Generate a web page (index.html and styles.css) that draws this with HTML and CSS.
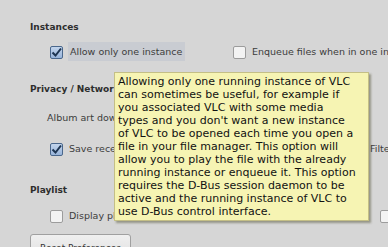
FILE: index.html
```html
<!DOCTYPE html>
<html>
<head>
<meta charset="utf-8">
<link rel="stylesheet" href="styles.css">
</head>
<body>
<div class="panel">
  <div class="heading h1">Instances</div>
  <div class="row r1">
    <div class="col first">
      <span class="cb checked"><svg viewBox="0 0 13 13" width="13" height="13"><path d="M2.5 6.5 L5.5 9.5 L11 2.5" fill="none" stroke="#1e3552" stroke-width="2"/></svg></span>
      <span class="label hl">Allow only one instance</span>
    </div>
    <div class="col">
      <span class="cb"></span>
      <span class="label">Enqueue files when in one instance mode</span>
    </div>
  </div>

  <div class="heading h2">Privacy / Network Interaction</div>
  <div class="row r2">
    <span class="label album">Album art download policy:</span>
  </div>
  <div class="row r3">
    <div class="col first">
      <span class="cb checked"><svg viewBox="0 0 13 13" width="13" height="13"><path d="M2.5 6.5 L5.5 9.5 L11 2.5" fill="none" stroke="#1e3552" stroke-width="2"/></svg></span>
      <span class="label">Save recently played items</span>
    </div>
    <div class="col filter">
      <span class="label">Filter:</span>
    </div>
  </div>

  <div class="heading h3">Playlist</div>
  <div class="row r4">
    <div class="col first">
      <span class="cb"></span>
      <span class="label">Display playlist tree</span>
    </div>
    <div class="col far">
      <span class="cb"></span>
    </div>
  </div>

  <div class="btnrow">
    <button class="btn">Reset Preferences</button>
  </div>
</div>

<div class="tooltip">Allowing only one running instance of VLC<br>can sometimes be useful, for example if<br>you associated VLC with some media<br>types and you don't want a new instance<br>of VLC to be opened each time you open a<br>file in your file manager. This option will<br>allow you to play the file with the already<br>running instance or enqueue it. This option<br>requires the D-Bus session daemon to be<br>active and the running instance of VLC to<br>use D-Bus control interface.</div>
</body>
</html>
```

FILE: styles.css
```css
html, body {
  margin: 0;
  padding: 0;
  width: 388px;
  height: 247px;
  overflow: hidden;
  background: #d6d6d6;
}

.panel {
  position: relative;
  padding-left: 30px;
  padding-top: 20px;
  font-family: "DejaVu Sans", sans-serif;
  font-size: 9.5px;
  color: #3c3c3c;
  white-space: nowrap;
}

.heading {
  height: 14px;
  line-height: 14px;
  font-weight: bold;
  font-size: 9px;
  color: #2e2e2e;
}

.h2 { margin-top: 21px; }
.h3 { margin-top: 25px; }

.row {
  display: flex;
  align-items: center;
  height: 20px;
}

.r1 { margin-top: 7px; }
.r2 { margin-top: 14px; height: 14px; }
.r3 { margin-top: 14px; }
.r4 { margin-top: 8px; }

.col {
  display: flex;
  align-items: center;
  height: 20px;
  flex: none;
}

.col.first {
  box-sizing: border-box;
  width: 203px;
  padding-left: 20px;
}

.col.filter { padding-left: 131px; }
.col.far { padding-left: 147px; }

.label {
  line-height: 19px;
  margin-left: 6px;
}

.label.hl {
  background: #c9ccd2;
  margin-left: 5px;
  padding: 0 2px;
  height: 19px;
  width: 113px;
}

.label.album {
  margin-left: 17px;
}

.cb {
  display: inline-block;
  box-sizing: border-box;
  width: 13px;
  height: 13px;
  border: 1px solid #9c9c9c;
  border-radius: 2px;
  background: #f3f3f3;
  flex: none;
  position: relative;
  top: 1px;
}

.cb.checked {
  border-color: #4a678c;
  background: linear-gradient(#c3d5ec, #98b4da);
}

.cb svg {
  display: block;
  margin: -1px;
}

.btnrow {
  margin-top: 9px;
}

.btn {
  width: 101px;
  height: 24px;
  box-sizing: border-box;
  border: 1px solid #a0a0a0;
  border-radius: 3px;
  background: linear-gradient(#f0f0f0, #e0e0e0);
  font-family: "DejaVu Sans", sans-serif;
  font-size: 9px;
  color: #333;
  padding: 4px 0 0 0;
  text-align: center;
  vertical-align: top;
}

.tooltip {
  position: absolute;
  left: 114px;
  top: 72px;
  width: 247px;
  height: 145px;
  padding: 2px 3px 0 3px;
  border: 1px solid #c4bf86;
  background: #f6f4b3;
  box-shadow: 2px 2px 2px rgba(70, 70, 40, 0.45);
  font-family: "DejaVu Sans", sans-serif;
  font-size: 11px;
  line-height: 13px;
  color: #111;
  white-space: nowrap;
  overflow: hidden;
}
```
